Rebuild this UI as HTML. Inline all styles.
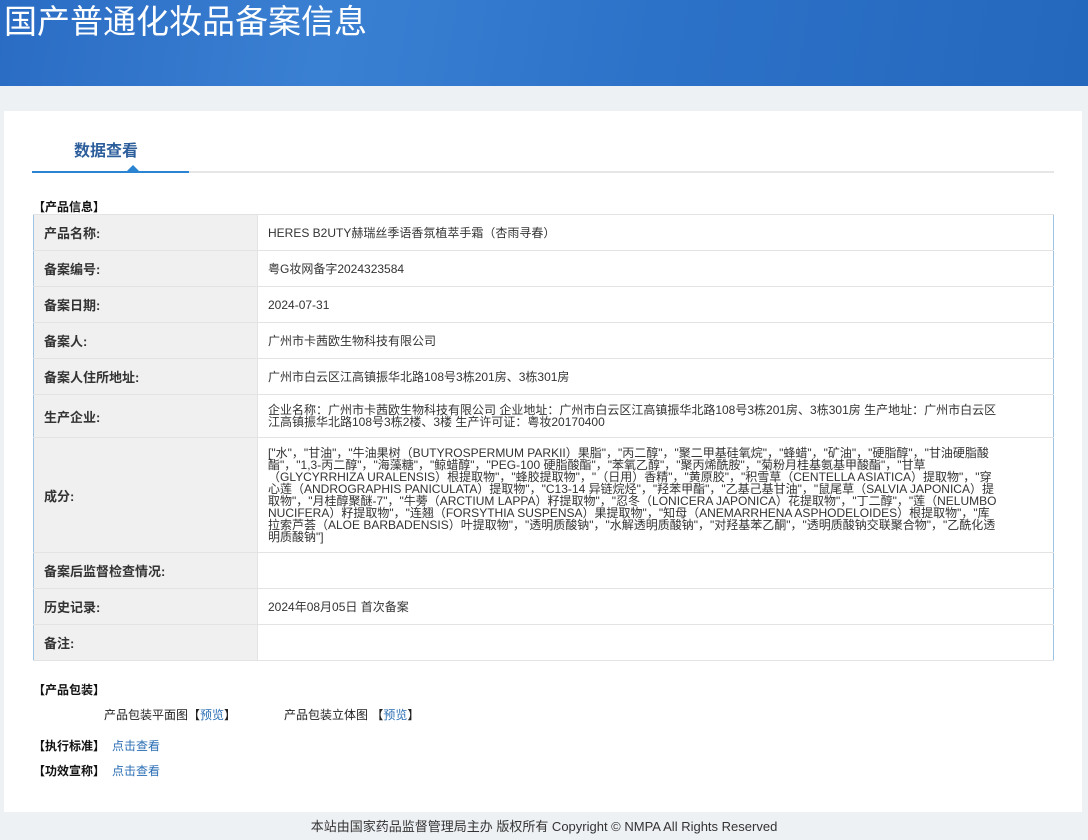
<!DOCTYPE html>
<html><head><meta charset="utf-8"><style>
*{margin:0;padding:0;box-sizing:border-box}
body{width:1088px;height:840px;background:#eef1f4;font-family:"Liberation Sans","Noto Sans CJK SC",sans-serif;color:#333;position:relative;overflow:hidden}
.hd{height:86px;background:linear-gradient(100deg,#2a6cc4 0%,#3a80d2 30%,#2c72c8 60%,#2468bd 100%);position:relative}
.hd h1{position:absolute;left:4px;top:2px;font-size:33px;font-weight:normal;color:#fff;line-height:40px}
.panel{position:absolute;left:4px;top:111px;width:1078px;height:701px;background:#fff}
.tab{position:absolute;left:28px;top:0;width:1022px;height:62px;border-bottom:2px solid #e6e6e6}
.tab span{position:absolute;left:42px;top:26px;font-size:16px;font-weight:bold;color:#2d5e9c}
.tab i{position:absolute;left:0;bottom:-2px;width:157px;height:2px;background:#2a84d2}
.tab b{position:absolute;left:95px;bottom:0;width:0;height:0;border-left:6px solid transparent;border-right:6px solid transparent;border-bottom:6px solid #2a84d2}
.sec{position:absolute;font-size:12px;font-weight:bold;color:#111}
table{position:absolute;left:29px;top:103px;width:1021px;border-collapse:collapse;border:1px solid #9fc3e3;font-size:12px}
td{border-top:1px solid #e3e3e3;border-bottom:1px solid #e3e3e3;padding:0 10px;vertical-align:middle}
td.l{width:224px;background:#f0f0f0;font-weight:bold;font-size:13px;color:#333;border-right:1px solid #e3e3e3}
td.v{color:#333;padding-right:52px;line-height:12px}
.lk{color:#2a6eb4}
.t{position:absolute;font-size:12px;color:#222}
.ft{position:absolute;top:816px;left:0;width:1088px;text-align:center;font-size:13px;color:#333}
</style></head><body>
<div class="hd"><h1>国产普通化妆品备案信息</h1></div>
<div class="panel">
<div class="tab"><span>数据查看</span><i></i><b></b></div>
<div class="sec" style="left:29px;top:87px">【产品信息】</div>
<table>
<tr style="height:36px"><td class="l">产品名称:</td><td class="v">HERES B2UTY赫瑞丝季语香氛植萃手霜（杏雨寻春）</td></tr>
<tr style="height:36px"><td class="l">备案编号:</td><td class="v">粤G妆网备字2024323584</td></tr>
<tr style="height:36px"><td class="l">备案日期:</td><td class="v">2024-07-31</td></tr>
<tr style="height:36px"><td class="l">备案人:</td><td class="v">广州市卡茜欧生物科技有限公司</td></tr>
<tr style="height:36px"><td class="l">备案人住所地址:</td><td class="v">广州市白云区江高镇振华北路108号3栋201房、3栋301房</td></tr>
<tr style="height:43px"><td class="l">生产企业:</td><td class="v">企业名称：广州市卡茜欧生物科技有限公司 企业地址：广州市白云区江高镇振华北路108号3栋201房、3栋301房 生产地址：广州市白云区江高镇振华北路108号3栋2楼、3楼 生产许可证：粤妆20170400</td></tr>
<tr style="height:115px"><td class="l">成分:</td><td class="v">["水"，"甘油"，"牛油果树（BUTYROSPERMUM PARKII）果脂"，"丙二醇"，"聚二甲基硅氧烷"，"蜂蜡"，"矿油"，"硬脂醇"，"甘油硬脂酸酯"，"1,3-丙二醇"，"海藻糖"，"鲸蜡醇"，"PEG-100 硬脂酸酯"，"苯氧乙醇"，"聚丙烯酰胺"，"菊粉月桂基氨基甲酸酯"，"甘草（GLYCYRRHIZA URALENSIS）根提取物"，"蜂胶提取物"，"（日用）香精"，"黄原胶"，"积雪草（CENTELLA ASIATICA）提取物"，"穿心莲（ANDROGRAPHIS PANICULATA）提取物"，"C13-14 异链烷烃"，"羟苯甲酯"，"乙基己基甘油"，"鼠尾草（SALVIA JAPONICA）提取物"，"月桂醇聚醚-7"，"牛蒡（ARCTIUM LAPPA）籽提取物"，"忍冬（LONICERA JAPONICA）花提取物"，"丁二醇"，"莲（NELUMBO NUCIFERA）籽提取物"，"连翘（FORSYTHIA SUSPENSA）果提取物"，"知母（ANEMARRHENA ASPHODELOIDES）根提取物"，"库拉索芦荟（ALOE BARBADENSIS）叶提取物"，"透明质酸钠"，"水解透明质酸钠"，"对羟基苯乙酮"，"透明质酸钠交联聚合物"，"乙酰化透明质酸钠"]</td></tr>
<tr style="height:36px"><td class="l">备案后监督检查情况:</td><td class="v"></td></tr>
<tr style="height:36px"><td class="l">历史记录:</td><td class="v">2024年08月05日 首次备案</td></tr>
<tr style="height:36px"><td class="l">备注:</td><td class="v"></td></tr>
</table>
<div class="sec" style="left:29px;top:570px">【产品包装】</div>
<div class="t" style="left:100px;top:595px">产品包装平面图【<span class="lk">预览</span>】</div>
<div class="t" style="left:280px;top:595px">产品包装立体图 【<span class="lk">预览</span>】</div>
<div class="sec" style="left:29px;top:626px">【执行标准】<span class="lk" style="font-weight:normal;margin-left:7px">点击查看</span></div>
<div class="sec" style="left:29px;top:651px">【功效宣称】<span class="lk" style="font-weight:normal;margin-left:7px">点击查看</span></div>
</div>
<div class="ft">本站由国家药品监督管理局主办 版权所有 Copyright © NMPA All Rights Reserved</div>
</body></html>
